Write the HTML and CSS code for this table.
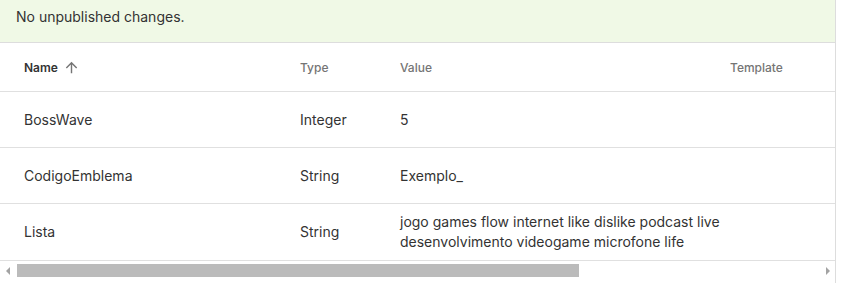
FILE: index.html
```html
<!DOCTYPE html>
<html lang="en">
<head>
    <meta charset="UTF-8">
    <title>Variables</title>
    <link rel="stylesheet" href="styles.css">
</head>
<body>
    <div class="panel">
        <div class="notice">No unpublished changes.</div>
        <div class="table-wrap">
            <table class="vars">
                <colgroup>
                    <col class="col-name">
                    <col class="col-type">
                    <col class="col-value">
                    <col class="col-template">
                </colgroup>
                <thead>
                    <tr>
                        <th class="sorted">Name
                            <svg class="sort-icon" viewBox="0 0 24 24" width="17" height="17">
                                <path d="M4 12l1.41 1.41L11 7.83V20h2V7.83l5.58 5.59L20 12l-8-8-8 8z"/>
                            </svg>
                        </th>
                        <th>Type</th>
                        <th>Value</th>
                        <th class="template">Template</th>
                    </tr>
                </thead>
                <tbody>
                    <tr>
                        <td>BossWave</td>
                        <td>Integer</td>
                        <td>5</td>
                        <td></td>
                    </tr>
                    <tr>
                        <td>CodigoEmblema</td>
                        <td>String</td>
                        <td>Exemplo_</td>
                        <td></td>
                    </tr>
                    <tr class="last">
                        <td>Lista</td>
                        <td>String</td>
                        <td>jogo games flow internet like dislike podcast live desenvolvimento videogame microfone life</td>
                        <td></td>
                    </tr>
                </tbody>
            </table>
        </div>
        <!-- horizontal scrollbar for the table -->
        <div class="hscroll">
            <span class="arrow arrow-left"></span>
            <div class="track">
                <div class="thumb"></div>
            </div>
            <span class="arrow arrow-right"></span>
        </div>
        <div class="panel-foot"></div>
    </div>
</body>
</html>
```

FILE: styles.css
```css
body {
    margin: 0;
    background: #fff;
    font-family: Inter, "Noto Sans", sans-serif;
    color: #333;
}

.panel {
    width: 835px;
    border-right: 1px solid #ddd;
}

.notice {
    height: 43px;
    box-sizing: border-box;
    padding: 7px 16px 0;
    font-size: 14px;
    line-height: 20px;
    background: #f0f9e6;
    border-bottom: 1px solid #ddd;
}

.table-wrap {
    overflow: hidden;
}

.vars {
    width: 1195px;
    table-layout: fixed;
    border-collapse: collapse;
}

.col-name { width: 276px; }
.col-type { width: 100px; }
.col-value { width: 350px; }

.vars th,
.vars td {
    padding: 0 0 0 24px;
    text-align: left;
    border-bottom: 1px solid #e0e0e0;
}

.vars th {
    height: 48px;
    font-size: 12px;
    font-weight: 500;
    color: #757575;
}

.vars th.sorted {
    font-weight: 600;
    color: #333;
}

.vars th.template {
    padding-left: 4px;
}

.sort-icon {
    fill: #757575;
    vertical-align: -4px;
    margin-left: 2px;
}

.vars td {
    height: 55px;
    font-size: 14px;
    line-height: 20px;
}

.vars tr.last td {
    height: 56px;
}

.hscroll {
    display: flex;
    align-items: center;
    height: 17px;
}

.track {
    flex: 1;
    height: 13px;
    margin-top: 2px;
}

.thumb {
    width: 562px;
    height: 100%;
    margin-left: 2px;
    background: #bbb;
}

.arrow {
    width: 15px;
    display: flex;
    justify-content: center;
}

.arrow::before {
    content: "";
    border-top: 4px solid transparent;
    border-bottom: 4px solid transparent;
    margin-top: 2px;
}

.arrow-left::before {
    border-right: 4px solid #a3a3a3;
}

.arrow-right::before {
    border-left: 4px solid #a3a3a3;
}

.panel-foot {
    height: 6px;
}
```
